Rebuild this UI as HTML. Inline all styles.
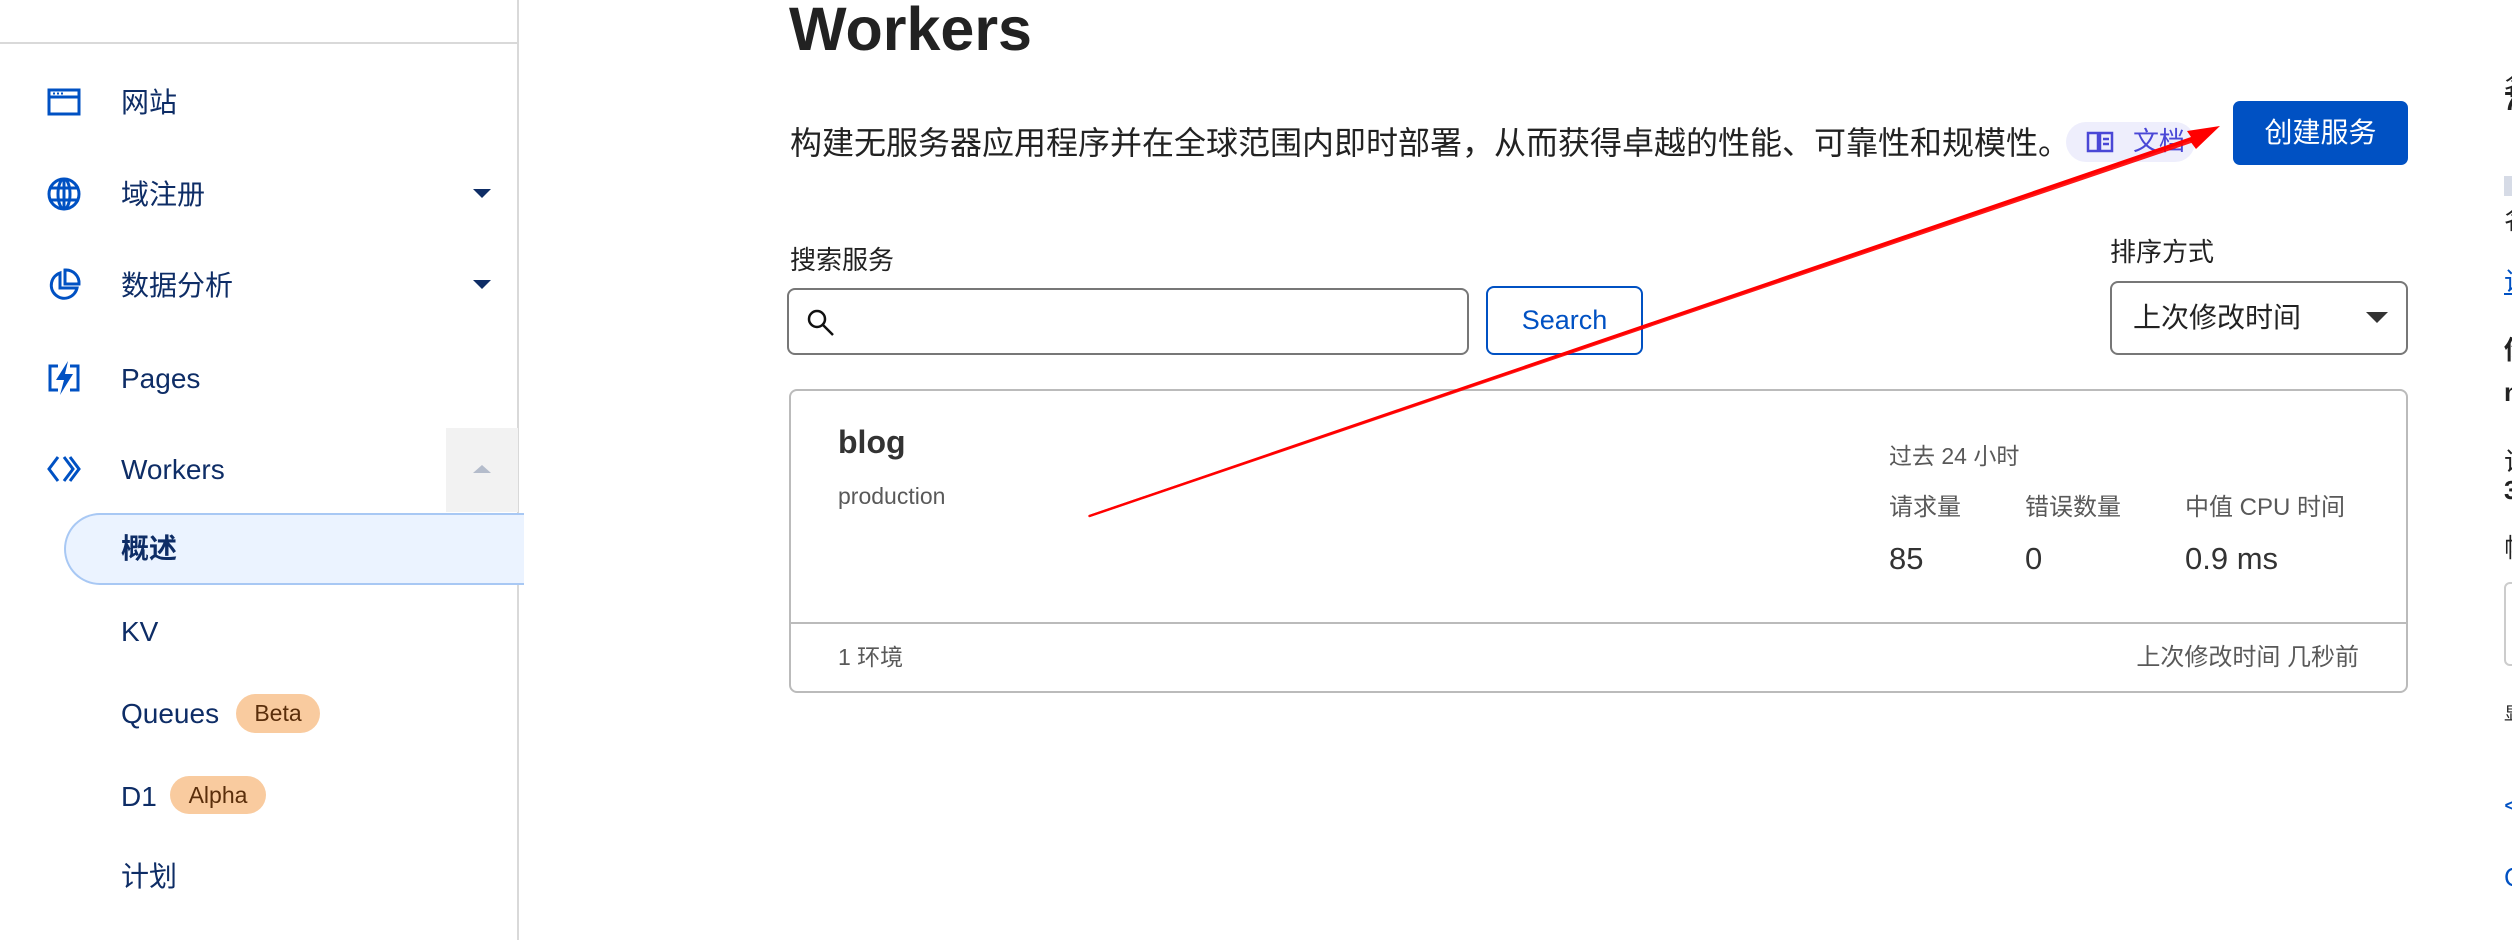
<!DOCTYPE html>
<html><head><meta charset="utf-8"><style>
*{margin:0;padding:0;box-sizing:border-box}
html,body{width:2512px;height:940px;overflow:hidden;background:#fff;font-family:"Liberation Sans","Noto Sans CJK SC",sans-serif}
.a{position:absolute;white-space:nowrap}
.nav{color:#0e2d66;font-size:28px;line-height:1}
.g{color:#595959}
</style></head><body>
<!-- sidebar -->
<div class="a" style="left:0;top:42px;width:519px;height:2px;background:#d9d9d9"></div>
<div class="a" style="left:517px;top:0;width:2px;height:940px;background:#d9d9d9"></div>
<div class="a" style="left:446px;top:428px;width:72px;height:84px;background:#f2f2f2"></div>
<div class="a" style="left:64px;top:513px;width:460px;height:72px;background:#ebf3ff;border:2px solid #a8c8f4;border-right:none;border-radius:36px 0 0 36px"></div>

<svg class="a" style="left:46px;top:84px" width="36" height="36" viewBox="0 0 36 36" fill="none" stroke="#0051c3" stroke-width="3"><rect x="3" y="6" width="30" height="24"/><line x1="3" y1="13" x2="33" y2="13"/><g stroke-width="2"><line x1="7" y1="9.5" x2="9" y2="9.5"/><line x1="11" y1="9.5" x2="13" y2="9.5"/><line x1="15" y1="9.5" x2="17" y2="9.5"/></g></svg>
<svg class="a" style="left:46px;top:176px" width="36" height="36" viewBox="0 0 36 36" fill="none" stroke="#0051c3" stroke-width="3"><circle cx="18" cy="18" r="15"/><ellipse cx="18" cy="18" rx="6" ry="15"/><line x1="3" y1="12" x2="33" y2="12"/><line x1="3" y1="24" x2="33" y2="24"/><line x1="18" y1="3" x2="18" y2="33"/></svg>
<svg class="a" style="left:46px;top:267px" width="36" height="36" viewBox="0 0 36 36" fill="none" stroke="#0051c3" stroke-width="3"><path d="M14 6 A13 13 0 1 0 31 21 H14 Z" fill="none"/><path d="M19 3 A13 13 0 0 1 33 17 H19 Z"/></svg>
<svg class="a" style="left:46px;top:359px" width="36" height="38" viewBox="0 0 36 38" fill="none"><path d="M12 7H4V31H12M24 7H32V31H24" stroke="#0051c3" stroke-width="3"/><path d="M22 2L10 21H18L14 36L27 15H19Z" fill="#0051c3"/></svg>
<svg class="a" style="left:46px;top:451px" width="36" height="36" viewBox="0 0 36 36" fill="none" stroke="#0051c3" stroke-width="3"><path d="M12 6L3 18L12 30"/><path d="M18 6L27 18L18 30"/><path d="M24 6L33 18L24 30"/></svg>

<div class="a nav" style="left:121px;top:89px">网站</div>
<div class="a nav" style="left:121px;top:181px">域注册</div>
<div class="a nav" style="left:121px;top:272px">数据分析</div>
<div class="a nav" style="left:121px;top:365px">Pages</div>
<div class="a nav" style="left:121px;top:456px">Workers</div>
<div class="a" style="left:473px;top:189px;border-left:9px solid transparent;border-right:9px solid transparent;border-top:9px solid #0e2d66"></div>
<div class="a" style="left:473px;top:280px;border-left:9px solid transparent;border-right:9px solid transparent;border-top:9px solid #0e2d66"></div>
<div class="a" style="left:473px;top:465px;border-left:9px solid transparent;border-right:9px solid transparent;border-bottom:8px solid #b4bccb"></div>
<div class="a nav" style="left:121px;top:535px;font-weight:bold">概述</div>
<div class="a nav" style="left:121px;top:618px">KV</div>
<div class="a nav" style="left:121px;top:700px">Queues</div>
<div class="a" style="left:236px;top:694px;width:84px;height:39px;border-radius:20px;background:#f9cb9f;color:#5a2e0b;font-size:23px;line-height:39px;text-align:center">Beta</div>
<div class="a nav" style="left:121px;top:783px">D1</div>
<div class="a" style="left:170px;top:776px;width:96px;height:38px;border-radius:20px;background:#f9cb9f;color:#5a2e0b;font-size:23px;line-height:38px;text-align:center">Alpha</div>
<div class="a nav" style="left:121px;top:863px">计划</div>

<!-- main -->
<div class="a" style="left:789px;top:-1px;font-size:61px;font-weight:bold;color:#222;line-height:1">Workers</div>
<div class="a" style="left:790px;top:127px;font-size:32px;color:#222;line-height:1">构建无服务器应用程序并在全球范围内即时部署，从而获得卓越的性能、可靠性和规模性。</div>
<div class="a" style="left:2066px;top:122px;width:129px;height:40px;border-radius:20px;background:#eeeefc"></div>
<svg class="a" style="left:2086px;top:130px" width="28" height="24" viewBox="0 0 28 24" fill="none" stroke="#4a47d6" stroke-width="2.5"><path d="M2 3H12V21H2Z M14 3H26V21H14Z"/><line x1="17" y1="9" x2="23" y2="9"/><line x1="17" y1="14" x2="23" y2="14"/></svg>
<div class="a" style="left:2133px;top:128px;font-size:26px;color:#4a47d6;line-height:1">文档</div>
<div class="a" style="left:2233px;top:101px;width:175px;height:64px;border-radius:7px;background:#0051c3;color:#fff;font-size:28px;line-height:64px;text-align:center">创建服务</div>

<div class="a" style="left:790px;top:247px;font-size:26px;color:#222;line-height:1">搜索服务</div>
<div class="a" style="left:787px;top:288px;width:682px;height:67px;border:2px solid #777;border-radius:8px"></div>
<svg class="a" style="left:806px;top:308px" width="32" height="32" viewBox="0 0 32 32" fill="none" stroke="#111" stroke-width="2.5"><circle cx="11" cy="11" r="8"/><line x1="17" y1="17" x2="27" y2="27"/></svg>
<div class="a" style="left:1486px;top:286px;width:157px;height:69px;border:2px solid #0051c3;border-radius:8px;color:#0051c3;font-size:27px;line-height:65px;text-align:center">Search</div>

<div class="a" style="left:2110px;top:239px;font-size:26px;color:#222;line-height:1">排序方式</div>
<div class="a" style="left:2110px;top:281px;width:298px;height:74px;border:2px solid #777;border-radius:8px"></div>
<div class="a" style="left:2133px;top:304px;font-size:28px;color:#222;line-height:1">上次修改时间</div>
<div class="a" style="left:2366px;top:312px;border-left:11px solid transparent;border-right:11px solid transparent;border-top:11px solid #333"></div>

<div class="a" style="left:789px;top:389px;width:1619px;height:304px;border:2px solid #bbb;border-radius:8px"></div>
<div class="a" style="left:789px;top:622px;width:1619px;height:2px;background:#bbb"></div>
<div class="a" style="left:838px;top:426px;font-size:32px;font-weight:bold;color:#333;line-height:1">blog</div>
<div class="a g" style="left:838px;top:485px;font-size:23px;line-height:1">production</div>
<div class="a g" style="left:838px;top:646px;font-size:23px;line-height:1">1 环境</div>
<div class="a g" style="left:1889px;top:445px;font-size:23px;line-height:1">过去 24 小时</div>
<div class="a g" style="left:1889px;top:496px;font-size:24px;line-height:1">请求量</div>
<div class="a g" style="left:2025px;top:496px;font-size:24px;line-height:1">错误数量</div>
<div class="a g" style="left:2185px;top:496px;font-size:24px;line-height:1">中值 CPU 时间</div>
<div class="a" style="left:1889px;top:543px;font-size:31px;color:#333;line-height:1">85</div>
<div class="a" style="left:2025px;top:543px;font-size:31px;color:#333;line-height:1">0</div>
<div class="a" style="left:2185px;top:543px;font-size:31px;color:#333;line-height:1">0.9 ms</div>
<div class="a g" style="right:153px;top:646px;font-size:24px;line-height:1">上次修改时间 几秒前</div>

<!-- right edge fragments -->
<div class="a" style="left:2504px;top:0;width:8px;height:940px;overflow:hidden;font-size:26px;color:#222">
<div class="a" style="top:66px;left:0">名</div>
<div class="a" style="top:86px;left:0;font-weight:bold">7</div>
<div class="a" style="top:176px;left:0;width:8px;height:20px;background:#d6dbe6"></div>
<div class="a" style="top:200px;left:0">名</div>
<div class="a" style="top:262px;left:0;color:#0051c3;text-decoration:underline">访</div>
<div class="a" style="top:330px;left:0;font-weight:bold">你</div>
<div class="a" style="top:377px;left:0;font-weight:bold">n</div>
<div class="a" style="top:442px;left:0">访</div>
<div class="a" style="top:475px;left:0;font-weight:bold">3</div>
<div class="a" style="top:528px;left:0">帧</div>
<div class="a" style="top:582px;left:0;width:20px;height:84px;border:2px solid #ccc;border-radius:6px"></div>
<div class="a" style="top:700px;left:0;font-size:18px">显</div>
<div class="a" style="top:790px;left:0;color:#0051c3">&lt;</div>
<div class="a" style="top:862px;left:0;color:#0051c3">C</div>
</div>

<!-- red arrow -->
<svg class="a" style="left:0;top:0" width="2512" height="940" viewBox="0 0 2512 940"><polygon points="1089,515 1090,517 2190,141 2196,149 2220,126 2187,131 2191,137" fill="#f00"/><path d="M1089.5 516 L2205 137" stroke="#f00" stroke-width="2.5" stroke-linecap="round" opacity="0.9"/></svg>
</body></html>
